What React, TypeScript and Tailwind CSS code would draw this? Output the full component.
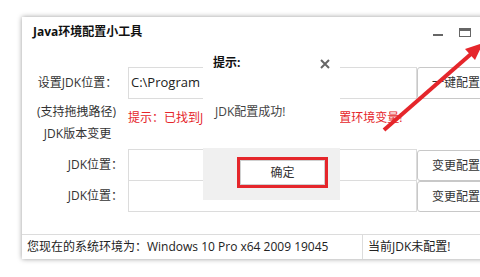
import React from "react";

const font = { fontFamily: '"Open Sans", "Noto Sans CJK SC", sans-serif' };

export default function App() {
  return (
    <div className="relative w-[480px] h-[277px] bg-white overflow-hidden text-[12px] text-[#333]" style={font}>
      <div className="pt-[17px] pl-[22px]">
        <div className="w-[520px] h-[242px] bg-white shadow-[0_0_5px_rgba(0,0,0,0.4)] flex flex-col">
          {/* title bar */}
          <div className="h-[30px] flex items-center pl-[11px] pr-[71px]">
            <span className="font-bold text-[12px] text-[#111] flex-1">Java环境配置小工具</span>
            <div className="w-[10px] h-[2px] bg-[#666] mt-[5px]" />
            <div className="ml-[16px] w-[12px] h-[9px] border border-[#666] border-t-[3px] mt-[1px]" />
          </div>

          <div className="pt-[20px] flex flex-col">
            {/* row 1 */}
            <div className="flex items-center h-[32px]">
              <div className="w-[93px] ml-[9px] text-center">设置JDK位置：</div>
              <div className="ml-[4px] w-[289px] h-[32px] border border-[#dcdcdc] flex items-center pl-[2px] text-[13px] text-[#222] whitespace-nowrap overflow-hidden">C:\Program Files\Java\jdk1.8.0_341</div>
              <div className="w-[78px] h-[32px] border border-[#c8c8c8] rounded-[3px] flex items-center justify-center">一键配置</div>
            </div>
            {/* row 2 */}
            <div className="flex h-[26px]">
              <div className="w-[93px] ml-[8px] text-center pt-[4px]">(支持拖拽路径)</div>
              <div className="ml-[5px] pt-[10px] text-[#e5262b] whitespace-nowrap">提示：已找到JDK，请点击右侧的一键配置环境变量!</div>
            </div>
            {/* row 3 */}
            <div className="flex h-[17px]">
              <div className="w-[93px] ml-[9px] text-center leading-[17px]">JDK版本变更</div>
            </div>
            {/* row 4 */}
            <div className="flex items-center h-[32px] mt-[7px]">
              <div className="w-[93px] ml-[9px] text-right pr-[1px]">JDK位置：</div>
              <div className="ml-[4px] w-[289px] h-[32px] border border-[#dcdcdc]" />
              <div className="w-[78px] h-[31px] mt-[1px] border border-[#c8c8c8] rounded-[3px] flex items-center justify-center">变更配置</div>
            </div>
            {/* row 5 */}
            <div className="flex items-center h-[32px] -mt-px">
              <div className="w-[93px] ml-[9px] text-right pr-[1px]">JDK位置：</div>
              <div className="ml-[4px] w-[289px] h-[32px] border border-[#dcdcdc]" />
              <div className="w-[78px] h-[31px] mt-[1px] border border-[#c8c8c8] rounded-[3px] flex items-center justify-center">变更配置</div>
            </div>
          </div>

          <div className="flex-1" />
          {/* status bar */}
          <div className="h-[25px] border-t border-[#dcdcdc] flex items-stretch text-[#222]">
            <div className="w-[341px] pl-[5px] flex items-center border-r border-[#dcdcdc]">您现在的系统环境为：Windows 10 Pro x64 2009 19045</div>
            <div className="pl-[5px] flex items-center">当前JDK未配置!</div>
          </div>
        </div>
      </div>

      {/* dialog */}
      <div className="absolute left-[203px] top-[44px] w-[137px] h-[156px] flex flex-col">
        <div className="h-[104px] bg-white flex flex-col">
          <div className="flex items-center h-[26px] pt-[12px] pl-[10px] pr-[10px]">
            <span className="font-bold text-[#111] flex-1">提示:</span>
            <svg width="10" height="10" viewBox="0 0 10 10" className="mt-[1px]">
              <path d="M1 1 L9 9 M9 1 L1 9" stroke="#666" strokeWidth="2" />
            </svg>
          </div>
          <div className="pl-[12px] pt-[33px] text-[#444]">JDK配置成功!</div>
        </div>
        <div className="h-[52px] bg-[#f0f0f0] pl-[34px] pt-[9px]">
          <div className="w-[91px] h-[31px] border-[3px] border-[#e5262b] bg-white flex items-center justify-center text-[#333]">
            <div className="w-full h-full border border-[#d0d0d0] flex items-center justify-center">确定</div>
          </div>
        </div>
      </div>

      {/* red arrow annotation */}
      <svg className="absolute left-0 top-0" width="480" height="277" viewBox="0 0 480 277">
        <line x1="384" y1="130" x2="471" y2="54" stroke="#e5262b" strokeWidth="4" />
        <polygon points="483,43 475,60 465,49" fill="#e5262b" />
      </svg>
    </div>
  );
}
